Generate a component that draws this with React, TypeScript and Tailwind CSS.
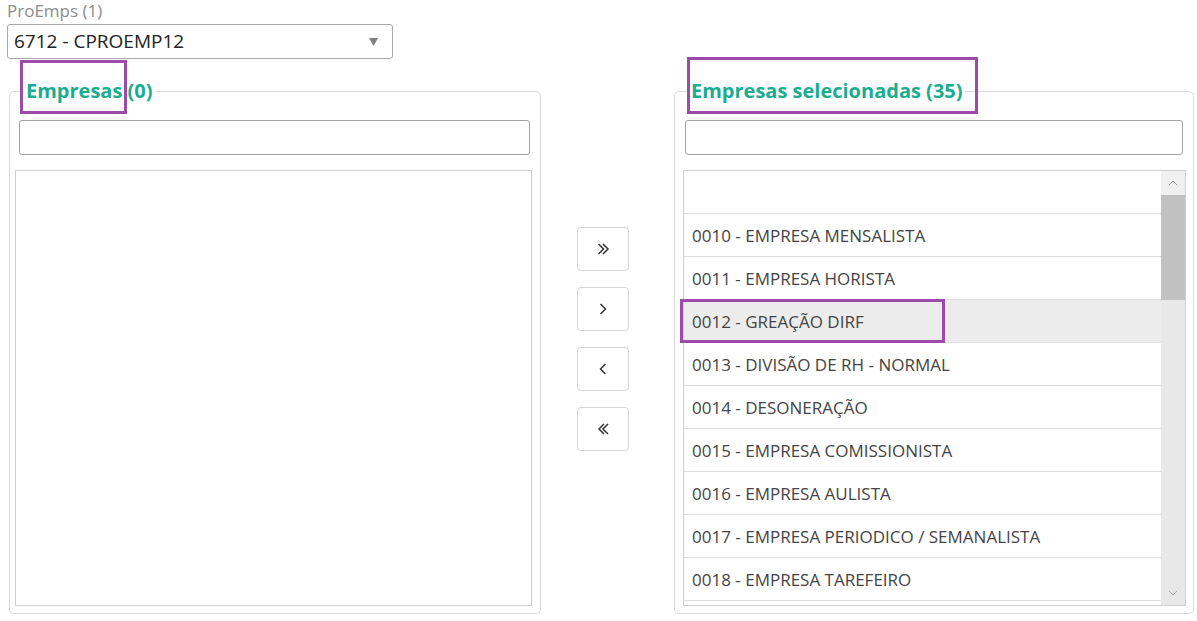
import { ChevronUp, ChevronDown } from 'lucide-react'

const selecionadas = [
  '0010 - EMPRESA MENSALISTA',
  '0011 - EMPRESA HORISTA',
  '0012 - GREAÇÃO DIRF',
  '0013 - DIVISÃO DE RH - NORMAL',
  '0014 - DESONERAÇÃO',
  '0015 - EMPRESA COMISSIONISTA',
  '0016 - EMPRESA AULISTA',
  '0017 - EMPRESA PERIODICO / SEMANALISTA',
  '0018 - EMPRESA TAREFEIRO',
]

// setas desenhadas à mão, mais próximas do glifo original
function Arrow({ dir, double }: { dir: 'left' | 'right'; double?: boolean }) {
  const single = dir === 'right' ? 'M1.5 1 L6.5 6 L1.5 11' : 'M6.5 1 L1.5 6 L6.5 11'
  const second = dir === 'right' ? 'M6 1 L11 6 L6 11' : 'M11 1 L6 6 L11 11'
  return (
    <svg width={double ? 13 : 8} height="12" viewBox={double ? '0 0 13 12' : '0 0 8 12'} fill="none" stroke="#333" strokeWidth="1.5" strokeLinejoin="miter">
      {double ? (
        <>
          <path d={dir === 'right' ? 'M1.5 1 L6.5 6 L1.5 11' : 'M7 1 L2 6 L7 11'} />
          <path d={second} />
        </>
      ) : (
        <path d={single} />
      )}
    </svg>
  )
}

function MoveButton({ children }: { children: React.ReactNode }) {
  return (
    <button className="flex h-[44px] w-[52px] items-center justify-center rounded-[4px] border border-[#d4d4d4] bg-white">
      {children}
    </button>
  )
}

export default function App() {
  return (
    <div className="relative h-[621px] w-[1197px] overflow-hidden bg-white font-['Open_Sans',sans-serif]">
      {/* ProEmps */}
      <div className="pl-[7px]">
        <div className="text-[17px] leading-[22px] text-[#8c8c8c]">ProEmps (1)</div>
        <div className="mt-[2px] flex h-[35px] w-[386px] items-center justify-between rounded-[3px] border border-[#a9a9a9] pl-[6px] pr-[14px]">
          <span className="text-[19px] text-[#222]">6712 - CPROEMP12</span>
          <svg width="9" height="8" viewBox="0 0 9 8">
            <path d="M0 0 H9 L4.5 8 Z" fill="#7f7f7f" />
          </svg>
        </div>
      </div>

      <div className="mt-[20px] flex items-start pl-[9px]">
        {/* Empresas */}
        <fieldset className="h-[535px] w-[532px] rounded-[5px] border border-[#d9d9d9] p-0">
          <legend className="ml-[14px] px-[2px] text-[20px] font-bold leading-[24px] text-[#1aad90]">Empresas (0)</legend>
          <input className="mt-[17px] ml-[9px] block h-[35px] w-[511px] rounded-[3px] border border-[#a3a3a3] outline-none" />
          <div className="mt-[15px] ml-[5px] h-[436px] w-[517px] border border-[#cfcfcf]" />
        </fieldset>

        {/* botões */}
        <div className="flex w-[133px] flex-col gap-[16px] pl-[36px] pt-[148px]">
          <MoveButton><Arrow dir="right" double /></MoveButton>
          <MoveButton><Arrow dir="right" /></MoveButton>
          <MoveButton><Arrow dir="left" /></MoveButton>
          <MoveButton><Arrow dir="left" double /></MoveButton>
        </div>

        {/* Empresas selecionadas */}
        <fieldset className="h-[535px] w-[520px] rounded-[5px] border border-[#d9d9d9] p-0">
          <legend className="ml-[14px] px-[2px] text-[20px] font-bold leading-[24px] text-[#1aad90]">Empresas selecionadas (35)</legend>
          <input className="mt-[17px] ml-[10px] block h-[35px] w-[498px] rounded-[3px] border border-[#a3a3a3] outline-none" />
          <div className="mt-[15px] ml-[8px] flex h-[436px] w-[503px] overflow-hidden border border-[#cfcfcf]">
            <div className="flex-1">
              <div className="h-[43px] border-b border-[#dedede]" />
              {selecionadas.map((item, i) => (
                <div
                  key={item}
                  className={
                    'flex h-[43px] items-center border-b border-[#dedede] pl-[8px] pt-[1px] text-[17px] text-[#444] ' +
                    (i === 2 ? 'bg-[#ececec]' : 'bg-white')
                  }
                >
                  {item}
                </div>
              ))}
            </div>
            <div className="flex w-[24px] flex-col bg-[#e8e8e8]">
              <div className="flex h-[24px] items-center justify-center bg-[#f0f0f0] text-[#8a8a8a]">
                <ChevronUp size={16} strokeWidth={1.3} />
              </div>
              <div className="h-[105px] bg-[#c1c1c1]" />
              <div className="flex-1" />
              <div className="flex h-[24px] items-center justify-center text-[#9a9a9a]">
                <ChevronDown size={16} strokeWidth={1.3} />
              </div>
            </div>
          </div>
        </fieldset>
      </div>

      {/* marcações */}
      <div className="pointer-events-none absolute left-[20px] top-[60px] h-[54px] w-[107px] border-[3px] border-[#9d4ba8]" />
      <div className="pointer-events-none absolute left-[687px] top-[57px] h-[57px] w-[291px] border-[3px] border-[#9d4ba8]" />
      <div className="pointer-events-none absolute left-[680px] top-[299px] h-[44px] w-[265px] border-[3px] border-[#9d4ba8]" />
    </div>
  )
}
